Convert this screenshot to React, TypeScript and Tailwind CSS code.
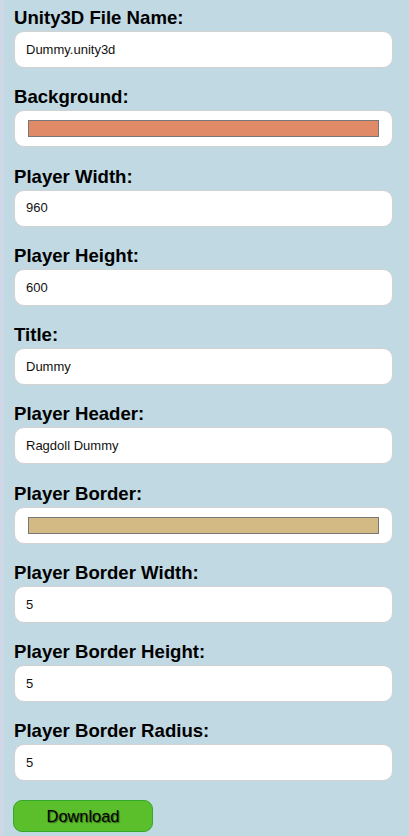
import React from "react";

type Field = {
  label: string;
  value?: string;
  color?: string;
};

const fields: Field[] = [
  { label: "Unity3D File Name:", value: "Dummy.unity3d" },
  { label: "Background:", color: "#e08a68" },
  { label: "Player Width:", value: "960" },
  { label: "Player Height:", value: "600" },
  { label: "Title:", value: "Dummy" },
  { label: "Player Header:", value: "Ragdoll Dummy" },
  { label: "Player Border:", color: "#d3ba84" },
  { label: "Player Border Width:", value: "5" },
  { label: "Player Border Height:", value: "5" },
  { label: "Player Border Radius:", value: "5" },
];

const App = () => {
  return (
    <div
      className="min-h-[836px] w-[409px] bg-[#c1d9e2] border-l-4 border-[#cdd7e5] pl-[10px] pr-[16px] pt-[7px]"
      style={{ fontFamily: '"Liberation Sans", Arial, sans-serif' }}
    >
      {fields.map((f) => (
        <div key={f.label} className="mb-[18.25px]">
          <div className="text-[18.6px] leading-[22px] font-bold text-black">
            {f.label}
          </div>
          <div className="mt-[2px] h-[37px] rounded-[10px] border border-[#d2d2d2] bg-white flex items-center">
            {f.color ? (
              <div
                className="mx-[13px] h-[17px] w-full border border-[#777777]"
                style={{ backgroundColor: f.color }}
              />
            ) : (
              <span className="pl-[11px] text-[13px] text-[#111]">{f.value}</span>
            )}
          </div>
        </div>
      ))}
      <button className="-ml-px mt-[0.75px] h-[32px] w-[140px] rounded-[9px] border border-[#34a82a] bg-[#5bbf2b] text-[16.4px] text-black [text-shadow:1px_1px_1px_rgba(0,0,0,0.5)]">
        Download
      </button>
    </div>
  );
};

export default App;
